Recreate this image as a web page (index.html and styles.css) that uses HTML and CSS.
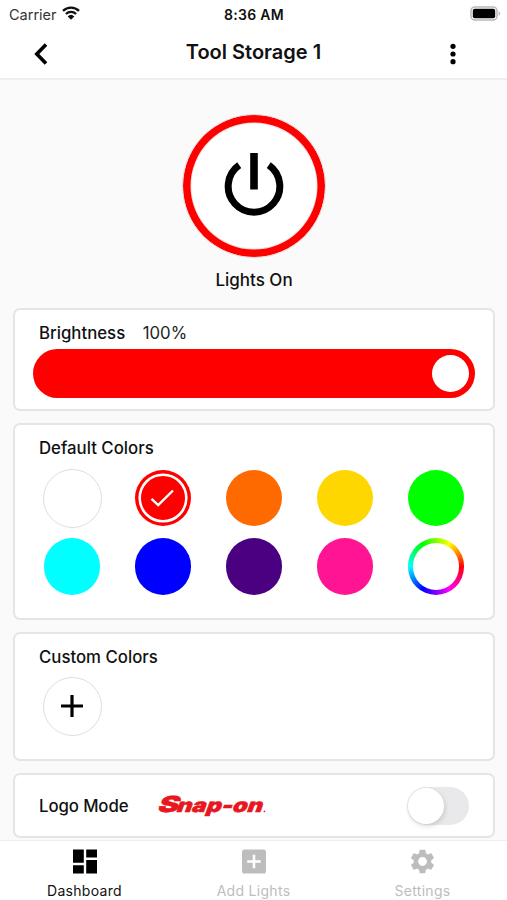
FILE: index.html
```html
<!DOCTYPE html>
<html lang="en">
<head>
	<meta charset="utf-8"/>
	<meta name="viewport" content="width=device-width, initial-scale=1"/>
	<title>Tool Storage 1</title>
	<link rel="stylesheet" href="styles.css">
</head>
<body>

<div class="status-bar">
	<div class="carrier">
		<span>Carrier</span>
		<svg width="18" height="14" viewBox="0 0 18 14">
			<path d="M1 4.9a11.4 11.4 0 0 1 16 0M3.9 8a7.2 7.2 0 0 1 10.2 0" fill="none" stroke="#111" stroke-width="2.3"/>
			<path d="M9 13.8 5.7 10.4a4.8 4.8 0 0 1 6.6 0z" fill="#111"/>
		</svg>
	</div>
	<div class="time">8:36 AM</div>
	<svg class="battery" width="31" height="15" viewBox="0 0 31 15">
		<rect x="1" y="1" width="26" height="13" rx="4" fill="#fff" stroke="#b9b9b9" stroke-width="1.6"/>
		<rect x="2.8" y="2.8" width="22.4" height="9.4" rx="2" fill="#000"/>
		<path d="M28.6 5.2c2 .8 2 3.8 0 4.6z" fill="#b9b9b9"/>
	</svg>
</div>

<div class="header">
	<svg width="14" height="22" viewBox="0 0 14 22"><path d="M12 1.6 2.8 11 12 20.4" fill="none" stroke="#000" stroke-width="3.6"/></svg>
	<h1>Tool Storage 1</h1>
	<svg width="6" height="22" viewBox="0 0 6 22"><circle cx="3" cy="3.3" r="2.6"/><circle cx="3" cy="11" r="2.6"/><circle cx="3" cy="18.7" r="2.6"/></svg>
</div>

<div class="main">
	<div class="power">
		<div class="power-button">
			<svg width="60" height="64" viewBox="0 0 60 64">
				<path d="M15.2 13.2a25.8 25.8 0 1 0 29.6 0" fill="none" stroke="#000" stroke-width="7"/>
				<path d="M30 1v36.5" stroke="#000" stroke-width="7.6"/>
			</svg>
		</div>
		<p>Lights On</p>
	</div>

	<div class="card brightness">
		<h2>Brightness <span class="value">100%</span></h2>
		<div class="slider"><div class="thumb"></div></div>
	</div>

	<div class="card defaults">
		<h2>Default Colors</h2>
		<div class="swatches">
			<div class="swatch white"></div>
			<div class="swatch red">
				<svg width="56" height="56" viewBox="0 0 56 56" fill="none" stroke="#fff">
					<circle cx="28" cy="28" r="23.3" stroke-width="2.6"/>
					<path d="m16.5 28.8 6.7 6.3L38 20.5" stroke-width="2.4"/>
				</svg>
			</div>
			<div class="swatch orange"></div>
			<div class="swatch yellow"></div>
			<div class="swatch green"></div>
			<div class="swatch cyan"></div>
			<div class="swatch blue"></div>
			<div class="swatch indigo"></div>
			<div class="swatch pink"></div>
			<div class="swatch wheel"></div>
		</div>
	</div>

	<div class="card custom">
		<h2>Custom Colors</h2>
		<div class="swatches">
			<div class="swatch add">
				<svg width="22" height="22" viewBox="0 0 22 22"><path d="M11 0v22M0 11h22" stroke="#000" stroke-width="3.2"/></svg>
			</div>
		</div>
	</div>

	<div class="card logo-mode">
		<h2>Logo Mode</h2>
		<svg class="logo" width="110" height="24" viewBox="0 0 110 24">
			<g transform="skewX(-20)">
				<text x="6" y="18" font-size="22" textLength="21" lengthAdjust="spacingAndGlyphs">S</text>
				<text x="25" y="18" font-size="19" textLength="86" lengthAdjust="spacingAndGlyphs">nap-on</text>
			</g>
			<circle cx="107.4" cy="17.4" r=".6"/>
		</svg>
		<div class="toggle"><div class="knob"></div></div>
	</div>
</div>

<div class="tabs">
	<div class="tab active">
		<svg width="24" height="24" viewBox="0 0 24 24"><path d="M0 0h10.8v13.2H0zM13.2 0H24v8H13.2zM0 15.8h10.8V24H0zM13.2 10.6H24V24H13.2z"/></svg>
		<span>Dashboard</span>
	</div>
	<div class="tab">
		<svg width="24" height="24" viewBox="0 0 24 24"><rect width="24" height="24" rx="2.6"/><path d="M12 5.2v13.6M5.2 12h13.6" stroke="#fff" stroke-width="2.6"/></svg>
		<span>Add Lights</span>
	</div>
	<div class="tab">
		<svg width="27" height="27" viewBox="1.8 1.8 20.4 20.4"><path d="M19.14 12.94c.04-.3.06-.61.06-.94 0-.32-.02-.64-.07-.94l2.03-1.58c.18-.14.23-.41.12-.61l-1.92-3.32c-.12-.22-.37-.29-.59-.22l-2.39.96c-.5-.38-1.03-.7-1.62-.94l-.36-2.54c-.04-.24-.24-.41-.48-.41h-3.84c-.24 0-.43.17-.47.41l-.36 2.54c-.59.24-1.13.57-1.62.94l-2.39-.96c-.22-.08-.47 0-.59.22L2.74 8.87c-.12.21-.08.47.12.61l2.03 1.58c-.05.3-.09.63-.09.94s.02.64.07.94l-2.03 1.58c-.18.14-.23.41-.12.61l1.92 3.32c.12.22.37.29.59.22l2.39-.96c.5.38 1.03.7 1.62.94l.36 2.54c.05.24.24.41.48.41h3.84c.24 0 .44-.17.47-.41l.36-2.54c.59-.24 1.13-.56 1.62-.94l2.39.96c.22.08.47 0 .59-.22l1.92-3.32c.12-.22.07-.47-.12-.61l-2.01-1.58zM12 15.6c-1.98 0-3.6-1.62-3.6-3.6s1.62-3.6 3.6-3.6 3.6 1.62 3.6 3.6-1.62 3.6-3.6 3.6z"/></svg>
		<span>Settings</span>
	</div>
</div>
</body>
</html>
```
FILE: styles.css
```css
* {
	box-sizing: border-box;
}

body {
	display: flex;
	flex-direction: column;
	height: 900px;
	margin: 0;
	overflow: hidden;
	background: #fafafa;
	color: #111;
	font-family: Inter, "Liberation Sans", sans-serif;
}

svg {
	display: block;
	flex: none;
}

h1, h2, p {
	margin: 0;
}

.status-bar {
	display: grid;
	grid-template-columns: 1fr auto 1fr;
	align-items: center;
	height: 28px;
	padding: 0 8px 0 9px;
	background: #fff;
	font-size: 14.5px;
}

.carrier {
	display: flex;
	align-items: center;
	gap: 6px;
	color: #333;
}

.carrier svg {
	margin: -2px 0 0 -1px;
}

.time {
	font-size: 14px;
	font-weight: 600;
	letter-spacing: .3px;
}

.battery {
	justify-self: end;
	margin: -2px -2px 0 0;
}

.header {
	display: grid;
	grid-template-columns: 1fr auto 1fr;
	align-items: center;
	height: 52px;
	padding: 2px 51px 0 34px;
	background: #fff;
	border-bottom: 2px solid #eee;
}

.header svg:last-child {
	justify-self: end;
}

h1 {
	padding-left: 17px;
	font-size: 20px;
	font-weight: 600;
	line-height: 24px;
	margin-top: -4px;
}

.main {
	flex: 1;
	display: flex;
	flex-direction: column;
	gap: 12px;
	padding: 34px 12px 0 13px;
}

.power {
	display: flex;
	flex-direction: column;
	align-items: center;
	height: 182px;
}

.power-button {
	display: flex;
	justify-content: center;
	align-items: center;
	width: 144px;
	height: 144px;
	padding-bottom: 4px;
	background: #fff;
	border: 1px solid #e6dcdc;
	border-radius: 50%;
	box-shadow: inset 0 0 0 7.5px #f00, inset 0 0 0 8.5px #f3dede;
}

.power p {
	margin-top: 12px;
	font-size: 17px;
	font-weight: 500;
	line-height: 20px;
}

.card {
	background: #fff;
	border: 2px solid #e5e5e5;
	border-radius: 7px;
}

h2 {
	padding-left: 24px;
	font-size: 16.8px;
	font-weight: 500;
	line-height: 20px;
}

.brightness {
	height: 103px;
	padding: 13px 18px 0 18px;
}

.brightness h2 {
	padding-left: 6px;
}

.value {
	margin-left: 13px;
	font-weight: 400;
	color: #222;
}

.slider {
	display: flex;
	justify-content: flex-end;
	align-items: center;
	height: 49px;
	margin-top: 6px;
	padding-right: 6px;
	background: #f00;
	border-radius: 25px;
}

.thumb {
	width: 37px;
	height: 37px;
	background: #fff;
	border-radius: 50%;
}

.defaults {
	height: 197px;
	padding-top: 13px;
}

.swatches {
	display: grid;
	grid-template-columns: repeat(5, 91px);
	grid-auto-rows: 56px;
	row-gap: 12.5px;
	place-items: center;
	margin: 12px 0 0 11.5px;
}

.swatch {
	width: 56.5px;
	height: 56.5px;
	border-radius: 50%;
}

.white, .add {
	width: 59px;
	height: 59px;
	border: 1px solid #dedede;
}

.red { background: #f00; }
.orange { background: #ff6a00; }
.yellow { background: #ffd700; }
.green { background: #0f0; }
.cyan { background: #0ff; }
.blue { background: #00f; }
.indigo { background: #4b0082; }
.pink { background: #ff1493; }

/* hue runs counter-clockwise from red on the right */
.wheel {
	padding: 5px;
	background: conic-gradient(from 90deg, #f00, #f0f, #00f, #0ff, #0f0, #ff0, #f00);
}

.wheel::before {
	content: "";
	display: block;
	height: 100%;
	background: #fff;
	border-radius: 50%;
}

.custom {
	height: 129px;
	padding-top: 13px;
}

.custom .swatches {
	margin-top: 11px;
}

.add {
	display: flex;
	justify-content: center;
	align-items: center;
}

.logo-mode {
	display: flex;
	align-items: center;
	height: 65px;
	padding-right: 24px;
}

.logo-mode h2 {
	width: 115px;
	letter-spacing: -.1px;
}

.logo {
	margin-left: 27px;
	overflow: visible;
	fill: #e8171f;
	stroke: #e8171f;
	stroke-width: .5px;
	font-family: Inter, "Liberation Sans", sans-serif;
	font-weight: 900;
}

.toggle {
	width: 62px;
	height: 38px;
	margin-left: auto;
	padding: 1px;
	background: #e9e9eb;
	border-radius: 19px;
}

.knob {
	width: 36px;
	height: 36px;
	background: #fff;
	border-radius: 50%;
	box-shadow: 1px 2px 5px rgba(0, 0, 0, .15);
}

.tabs {
	display: grid;
	grid-template-columns: repeat(3, 1fr);
	height: 60px;
	background: #fff;
	border-top: 1px solid #eee;
}

.tab {
	display: flex;
	flex-direction: column;
	justify-content: space-between;
	align-items: center;
	padding: 8px 0 0;
	color: #bdbdbd;
	fill: #bdbdbd;
	font-size: 14px;
	line-height: 20px;
}

.tab svg {
	height: 25px;
}

.tab span {
	height: 19px;
	letter-spacing: .3px;
}

.active {
	color: #111;
	fill: #000;
}
```
